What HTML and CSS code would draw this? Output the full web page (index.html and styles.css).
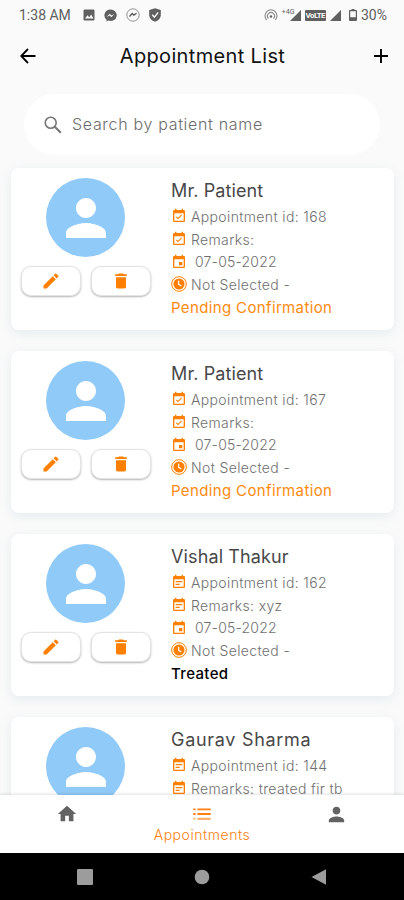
FILE: index.html
```
<!DOCTYPE html>
<html lang="en">
   <head>
      <meta charset="UTF-8">
      <meta name="viewport" content="width=device-width, initial-scale=1.0">
      <title>Appointment List</title>
      <link rel="stylesheet" href="styles.css">
   </head>

   <body>
      <!---------------ICONS-------------->
      <svg class="sprite" width="0" height="0">
         <symbol id="person" viewBox="0 0 24 24"><path d="M12 12c2.21 0 4-1.79 4-4s-1.790-4-4-4-4 1.790-4 4 1.790 4 4 4zm0 2c-2.670 0-8 1.340-8 4v2h16v-2c0-2.660-5.330-4-8-4z"/></symbol>
         <symbol id="edit" viewBox="0 0 24 24"><path d="M3 17.250V21h3.750L17.810 9.940l-3.750-3.750L3 17.250zM20.710 7.040a1 1 0 0 0 0-1.410l-2.340-2.340a1 1 0 0 0-1.410 0l-1.830 1.830 3.750 3.750 1.830-1.830z"/></symbol>
         <symbol id="trash" viewBox="0 0 24 24"><path d="M6 19c0 1.100.9 2 2 2h8c1.100 0 2-.9 2-2V7.500H6V19zM19 4h-3.500l-1-1h-5l-1 1H5v2h14V4z"/></symbol>
         <symbol id="note" viewBox="0 0 24 24"><path d="M19 3h-1V1h-2v2H8V1H6v2H5c-1.100 0-2 .9-2 2v14a2 2 0 0 0 2 2h14a2 2 0 0 0 2-2V5a2 2 0 0 0-2-2zm0 16H5V8h14v11zM7 10.500h10v2H7zM7 14.500h6v2H7z"/></symbol>
         <symbol id="check" viewBox="0 0 24 24"><path d="M19 3h-1V1h-2v2H8V1H6v2H5c-1.100 0-2 .9-2 2v14a2 2 0 0 0 2 2h14a2 2 0 0 0 2-2V5a2 2 0 0 0-2-2zm0 16H5V8h14v11zM16.500 11l-1.100-1.100-4.800 4.800-2.100-2.100-1.100 1.100 3.200 3.200z"/></symbol>
         <symbol id="date" viewBox="0 0 24 24"><path d="M19 3h-1V1h-2v2H8V1H6v2H5c-1.100 0-2 .9-2 2v14a2 2 0 0 0 2 2h14a2 2 0 0 0 2-2V5a2 2 0 0 0-2-2zm0 16H5V8h14v11zM12 12h5v5h-5z"/></symbol>
         <symbol id="clock" viewBox="0 0 24 24"><circle cx="12" cy="12" r="11" fill="none" stroke="currentColor" stroke-width="1.500"/><circle cx="12" cy="12" r="8.300"/><path d="M11.500 7v5.500l4 2.600" fill="none" stroke="#fff" stroke-width="1.800"/></symbol>
         <symbol id="signal" viewBox="0 0 12 12"><path d="M0 12 12 0v12z"/></symbol>
      </svg>

      <div class="phone">
         <!---------------STATUS BAR-------------->
         <div class="status-bar">
            <span class="time">1:38 AM</span>
            <div class="status-left">
               <svg width="12" height="12" viewBox="0 0 12 12"><rect x=".5" y=".5" width="11" height="11" rx="1.200"/><path d="M2 9.500 4.500 6.300l1.700 1.900L8.200 5.500l2.300 4z" fill="#fafafa"/></svg>
               <svg width="13" height="13" viewBox="0 0 13 13"><path d="M6.500.5a6 5.700 0 0 0-4 10v2l2-1a6 5.700 0 1 0 2-11z"/><path d="m2.700 8 3-3.200 1.800 1.700L10.300 5 7.400 8.200 5.700 6.600z" fill="#fafafa"/></svg>
               <svg width="14" height="14" viewBox="0 0 14 14"><circle cx="7" cy="7" r="6.200" fill="none" stroke="#777" stroke-width=".8"/><path d="m3.500 8.500 2.700-3 1.700 1.600 2.600-1.800" fill="none" stroke="#555" stroke-width="1.300"/></svg>
               <svg width="12" height="14" viewBox="0 0 12 14"><path d="M6 .3 11.800 2v5.200c0 3-2.400 5.300-5.800 6.500C2.600 12.500.2 10.200.2 7.200V2z"/><path d="m3.200 6.700 2.200 2.400 3.700-4.600" fill="none" stroke="#fafafa" stroke-width="1.400"/></svg>
            </div>
            <div class="status-right">
               <svg class="hotspot" width="14" height="12" viewBox="0 0 14 12"><g fill="none" stroke="#888" stroke-width="1.100"><path d="M2.700 11a6 6 0 1 1 8.600 0"/><path d="M4.500 9.500a3.500 3.500 0 1 1 5 0"/></g><circle cx="7" cy="7.500" r="1.200"/></svg>
               <span class="net">+4G</span>
               <svg class="bars" width="11" height="11"><use href="#signal"/></svg>
               <span class="volte">VoLTE</span>
               <svg class="bars-two" width="11" height="11"><use href="#signal"/></svg>
               <svg class="battery" width="8" height="12" viewBox="0 0 8 12"><path fill-rule="evenodd" d="M2.500 0h3v1H7a1 1 0 0 1 1 1v9a1 1 0 0 1-1 1H1a1 1 0 0 1-1-1V2a1 1 0 0 1 1-1h1.500zM1.200 2.300v5.900h5.600V2.300z"/></svg>
               <span class="percent">30%</span>
            </div>
         </div>

         <!---------------HEADER-------------->
         <header class="header">
            <svg class="back" width="16" height="16" viewBox="0 0 16 16"><path d="M15.500 8H1.500M8 1 1.200 8 8 15" fill="none" stroke="#000" stroke-width="1.800"/></svg>
            <h1 class="title">Appointment List</h1>
            <svg class="add" width="14" height="14" viewBox="0 0 14 14"><path d="M7 0v14M0 7h14" stroke="#000" stroke-width="1.900"/></svg>
         </header>

         <!---------------CONTENT-------------->
         <main class="content">
            <div class="search">
               <svg width="18" height="18" viewBox="0 0 18 18"><g fill="none" stroke="#757575"><circle cx="6.700" cy="6.700" r="5.500" stroke-width="1.600"/><path d="m10.800 10.800 6 6" stroke-width="2"/></g></svg>
               <span class="search-text">Search by patient name</span>
            </div>

            <div class="card">
               <div class="card-left">
                  <div class="avatar"><svg width="60" height="60"><use href="#person"/></svg></div>
                  <div class="actions">
                     <button type="button"><svg width="20" height="20"><use href="#edit"/></svg></button>
                     <button type="button"><svg width="20" height="20"><use href="#trash"/></svg></button>
                  </div>
               </div>
               <div class="card-info">
                  <h2 class="name">Mr. Patient</h2>
                  <div class="row"><svg><use href="#check"/></svg><span>Appointment id: 168</span></div>
                  <div class="row"><svg><use href="#check"/></svg><span>Remarks:</span></div>
                  <div class="row"><svg><use href="#date"/></svg><span class="date">07-05-2022</span></div>
                  <div class="row"><svg class="clock"><use href="#clock"/></svg><span>Not Selected -</span></div>
                  <p class="status pending">Pending Confirmation</p>
               </div>
            </div>

            <div class="card">
               <div class="card-left">
                  <div class="avatar"><svg width="60" height="60"><use href="#person"/></svg></div>
                  <div class="actions">
                     <button type="button"><svg width="20" height="20"><use href="#edit"/></svg></button>
                     <button type="button"><svg width="20" height="20"><use href="#trash"/></svg></button>
                  </div>
               </div>
               <div class="card-info">
                  <h2 class="name">Mr. Patient</h2>
                  <div class="row"><svg><use href="#check"/></svg><span>Appointment id: 167</span></div>
                  <div class="row"><svg><use href="#check"/></svg><span>Remarks:</span></div>
                  <div class="row"><svg><use href="#date"/></svg><span class="date">07-05-2022</span></div>
                  <div class="row"><svg class="clock"><use href="#clock"/></svg><span>Not Selected -</span></div>
                  <p class="status pending">Pending Confirmation</p>
               </div>
            </div>

            <div class="card">
               <div class="card-left">
                  <div class="avatar"><svg width="60" height="60"><use href="#person"/></svg></div>
                  <div class="actions">
                     <button type="button"><svg width="20" height="20"><use href="#edit"/></svg></button>
                     <button type="button"><svg width="20" height="20"><use href="#trash"/></svg></button>
                  </div>
               </div>
               <div class="card-info">
                  <h2 class="name">Vishal Thakur</h2>
                  <div class="row"><svg><use href="#note"/></svg><span>Appointment id: 162</span></div>
                  <div class="row"><svg><use href="#note"/></svg><span>Remarks: xyz</span></div>
                  <div class="row"><svg><use href="#date"/></svg><span class="date">07-05-2022</span></div>
                  <div class="row"><svg class="clock"><use href="#clock"/></svg><span>Not Selected -</span></div>
                  <p class="status treated">Treated</p>
               </div>
            </div>

            <div class="card">
               <div class="card-left">
                  <div class="avatar"><svg width="60" height="60"><use href="#person"/></svg></div>
               </div>
               <div class="card-info">
                  <h2 class="name wide">Gaurav Sharma</h2>
                  <div class="row"><svg><use href="#note"/></svg><span>Appointment id: 144</span></div>
                  <div class="row"><svg><use href="#note"/></svg><span>Remarks: treated fir tb</span></div>
               </div>
            </div>
         </main>

         <!---------------BOTTOM TABS-------------->
         <nav class="tabs">
            <div class="tab"><svg width="22" height="22" viewBox="0 0 24 24"><path d="M10 20v-6h4v6h5v-8h3L12 3 2 12h3v8z"/></svg></div>
            <div class="tab active">
               <svg width="22" height="22" viewBox="0 0 24 24"><path d="M2.500 6H5v2H2.500zM2.500 11H5v2H2.500zM7 6h14.500v2H7zM7 11h14.500v2H7z"/><path d="M2.500 16H5v2H2.500zM7 16h14.500v2.500H7z" opacity=".6"/></svg>
               <span>Appointments</span>
            </div>
            <div class="tab"><svg width="23" height="23"><use href="#person"/></svg></div>
         </nav>

         <div class="system-bar">
            <svg width="16" height="16"><rect width="16" height="16" rx="1"/></svg>
            <svg width="16" height="16"><circle cx="8" cy="8" r="7.300"/></svg>
            <svg width="16" height="16"><path d="M.5 8 15 .2v15.600z"/></svg>
         </div>
      </div>
   </body>
</html>
```
FILE: styles.css
```
*{
   box-sizing: border-box;
   margin: 0;
   padding: 0;
}

body{
   font-family: Inter, "Liberation Sans", sans-serif;
   background: #fafafa;
}

svg{
   display: block;
   flex: none;
   fill: currentColor;
}

.sprite{
   position: absolute;
}

.phone{
   display: flex;
   flex-direction: column;
   width: 404px;
   height: 900px;
   overflow: hidden;
   white-space: nowrap;
}

/* status bar */
.status-bar{
   display: flex;
   align-items: center;
   height: 30px;
   padding: 0 17px 0 19px;
   font-family: Roboto, sans-serif;
   font-size: 14px;
   color: #606060;
}

.time{
   width: 64px;
}

.status-left{
   display: flex;
   align-items: center;
   gap: 9px;
}

.status-right{
   display: flex;
   align-items: center;
   margin-left: auto;
}

.net{
   margin: -7px -5px 0 4px;
   font-size: 7px;
}

.volte{
   height: 11px;
   margin: 0 4px;
   padding: 0 1px;
   border-radius: 1px;
   background: #606060;
   color: #fafafa;
   font-size: 8px;
   font-weight: 700;
   line-height: 11px;
   letter-spacing: -0.6px;
}

.battery{
   margin: 0 4px 0 8px;
}

/* header */
.header{
   display: flex;
   align-items: center;
   justify-content: space-between;
   height: 52px;
   padding: 0 16px 0 20px;
}

.title{
   margin-right: 5px;
   font-size: 20px;
   font-weight: 400;
   letter-spacing: 0.35px;
   color: #111;
}

/* search */
.content{
   flex: 1;
   min-height: 0;
   padding: 12px 10px 0 11px;
   overflow: hidden;
}

.search{
   display: flex;
   align-items: center;
   gap: 10px;
   height: 61px;
   margin: 0 14px 13px 13px;
   padding-left: 20px;
   border-radius: 31px;
   background: #fff;
   font-size: 16px;
   color: #6c6c6c;
}

.search-text{
   padding-bottom: 2px;
   font-weight: 300;
   letter-spacing: 0.68px;
}

/* cards */
.card{
   display: flex;
   height: 162px;
   margin-bottom: 21px;
   border-radius: 8px;
   background: #fff;
   box-shadow: 0 3px 12px rgba(120, 160, 180, 0.16);
}

.card-left{
   width: 160px;
   padding: 10px 0 0 10px;
}

.avatar{
   display: flex;
   align-items: center;
   justify-content: center;
   width: 79px;
   height: 79px;
   margin-left: 25px;
   border-radius: 50%;
   background: #90caf9;
   color: #fff;
}

.actions{
   display: flex;
   gap: 10px;
   margin-top: 9px;
}

button{
   display: flex;
   align-items: center;
   justify-content: center;
   width: 60px;
   height: 30px;
   border: 1px solid #e4e4e4;
   border-radius: 10px;
   background: #fff;
   box-shadow: 0 1px 2px rgba(0, 0, 0, 0.3);
   color: #ff8000;
}

.card-info{
   padding-top: 11px;
}

.name{
   height: 26px;
   font-size: 18px;
   font-weight: 400;
   line-height: 24px;
   letter-spacing: 0.12px;
   color: #484848;
}

.wide{
   letter-spacing: 0.7px;
}

.row{
   display: flex;
   align-items: center;
   height: 22.7px;
   font-size: 14px;
   font-weight: 300;
   letter-spacing: 0.36px;
   color: #707070;
}

.row svg{
   width: 16px;
   height: 16px;
   margin-right: 4px;
   color: #ff8000;
}

.row .date{
   margin-left: 4px;
   letter-spacing: 0.2px;
}

.status{
   font-size: 15px;
   line-height: 24px;
   letter-spacing: 0.36px;
}

.pending{
   color: #ff8a10;
}

.treated{
   font-weight: 500;
   color: #000;
}

/* bottom tabs */
.tabs{
   display: flex;
   height: 58px;
   padding-top: 8px;
   background: #fff;
   box-shadow: 0 -1px 3px rgba(0, 0, 0, 0.12);
   color: #626262;
   z-index: 1;
}

.tab{
   display: flex;
   flex: 1;
   flex-direction: column;
   align-items: center;
}

.active{
   gap: 1px;
   font-size: 14px;
   font-weight: 300;
   letter-spacing: 0.55px;
   color: #ff7f11;
}

.system-bar{
   display: flex;
   align-items: center;
   justify-content: center;
   gap: 101px;
   height: 47px;
   background: #000;
   color: #9c9c9c;
   z-index: 1;
}
```
